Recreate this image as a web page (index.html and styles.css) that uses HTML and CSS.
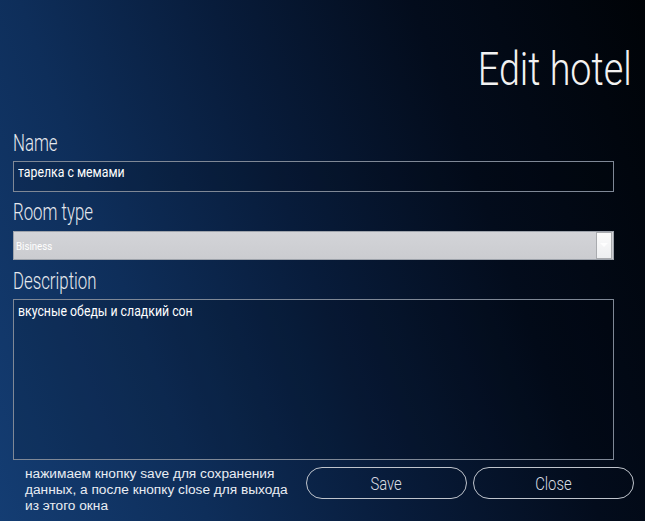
FILE: index.html
```html
<!DOCTYPE html>
<html lang="ru">
<head>
<meta charset="utf-8">
<title>Edit hotel</title>
<link rel="stylesheet" href="styles.css">
</head>
<body>
<div class="window">
  <h1 class="title"><span class="cond">Edit hotel</span></h1>
  <div class="form">
    <div class="label label-first"><span class="cond">Name</span></div>
    <div class="input"><span class="field-text">тарелка с мемами</span></div>
    <div class="label"><span class="cond">Room type</span></div>
    <div class="combo">
      <span class="combo-text">Bisiness</span>
      <span class="combo-btn"><svg width="8" height="5" viewBox="0 0 8 5"><path d="M0 0 L8 0 L4 4 Z" fill="#ffffff"/></svg></span>
    </div>
    <div class="label label-desc"><span class="cond">Description</span></div>
    <div class="textarea"><span class="field-text">вкусные обеды и сладкий сон</span></div>
  </div>
  <div class="footer">
    <p class="hint">нажимаем кнопку save для сохранения<br>данных, а после кнопку close для выхода<br>из этого окна</p>
    <div class="buttons">
      <button class="btn"><span class="btn-text">Save</span></button>
      <button class="btn"><span class="btn-text">Close</span></button>
    </div>
  </div>
</div>
</body>
</html>
```

FILE: styles.css
```css
html, body {
  margin: 0;
  padding: 0;
}

body {
  width: 645px;
  height: 521px;
  overflow: hidden;
  background: linear-gradient(70deg, #143d73 0%, #0e2e5a 25%, #081c3b 48%, #030c1c 72%, #000307 100%);
  font-family: Roboto, "Liberation Sans", sans-serif;
  color: #ffffff;
}

.window {
  box-sizing: border-box;
  width: 645px;
  height: 521px;
  padding: 46px 11px 0 13px;
  display: flex;
  flex-direction: column;
}

.title {
  margin: 0 2px 0 0;
  height: 46px;
  font-size: 46px;
  line-height: 46px;
  font-weight: 300;
  text-align: right;
  color: #f2f2f2;
  white-space: nowrap;
}

.title .cond {
  display: inline-block;
  transform: scaleX(0.82);
  transform-origin: right center;
}

.form {
  width: 601px;
  display: flex;
  flex-direction: column;
}

.label {
  height: 24px;
  margin-top: 8px;
  margin-bottom: 7px;
  font-size: 24px;
  line-height: 24px;
  font-weight: 300;
  color: #e6e9ee;
  white-space: nowrap;
}

.label-first {
  margin-top: 39px;
  margin-bottom: 6px;
}

.label-desc {
  margin-top: 9px;
  margin-bottom: 6px;
}

.cond {
  display: inline-block;
  transform: scaleX(0.7);
  transform-origin: left center;
}

.input,
.textarea {
  box-sizing: border-box;
  border: 1px solid #7f8896;
  background: rgba(0, 0, 0, 0.12);
  padding: 3px 4px 0 4px;
  font-size: 15px;
  line-height: 15px;
  white-space: nowrap;
}

.input {
  height: 31px;
}

.textarea {
  height: 161px;
  padding-top: 4px;
}

.field-text {
  display: inline-block;
  transform: scaleX(0.82);
  transform-origin: left center;
  color: #ffffff;
}

.combo {
  box-sizing: border-box;
  height: 29px;
  border: 1px solid #9ea3ab;
  background: linear-gradient(#d3d4d8, #cbccd0);
  display: flex;
  align-items: center;
  justify-content: space-between;
  padding: 0 1px 0 2px;
}

.combo-text {
  display: inline-block;
  font-size: 11px;
  font-weight: 400;
  color: #ffffff;
  transform: scaleX(0.88);
  transform-origin: left center;
  margin-top: 1px;
}

.combo-btn {
  box-sizing: border-box;
  width: 16px;
  height: 27px;
  border: 1px solid #a9abaf;
  background: linear-gradient(#fbfbfb, #eeeff1);
  display: flex;
  align-items: center;
  justify-content: center;
}

.combo-btn svg {
  opacity: 0.9;
}

.footer {
  margin-top: 6px;
  display: flex;
  justify-content: space-between;
  align-items: flex-start;
}

.hint {
  margin: 0 0 0 12px;
  font-family: "Liberation Sans", Arial, sans-serif;
  font-size: 13.7px;
  line-height: 16px;
  color: #e9edf3;
  white-space: nowrap;
}

.buttons {
  margin-top: 1px;
  display: flex;
  gap: 6px;
}

.btn {
  box-sizing: border-box;
  width: 161px;
  height: 32px;
  border: 1.5px solid #bfc4cc;
  border-radius: 16px;
  background: transparent;
  padding: 0;
  font-family: Roboto, "Liberation Sans", sans-serif;
  font-size: 19px;
  font-weight: 300;
  color: #dadde3;
  cursor: pointer;
}

.btn-text {
  display: inline-block;
  transform: scaleX(0.78);
}
```
